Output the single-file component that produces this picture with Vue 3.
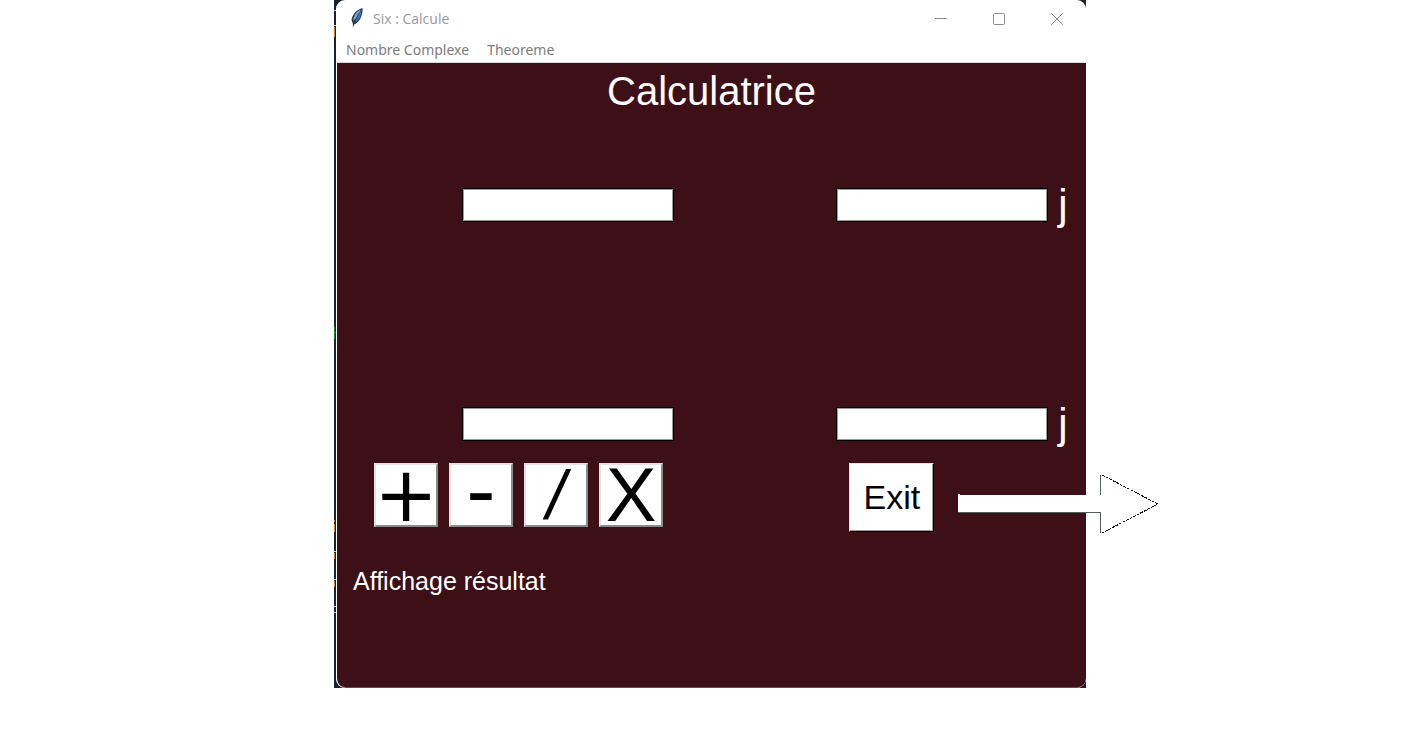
<script setup>
import { ref } from 'vue'

const values = ref({ re1: '', im1: '', re2: '', im2: '' })
const rows = [
  { re: 're1', im: 'im1' },
  { re: 're2', im: 'im2' },
]
const operators = [
  { sign: '+', name: 'plus' },
  { sign: '-', name: 'minus' },
  { sign: '/', name: 'divide' },
  { sign: 'X', name: 'times' },
]
</script>

<template>
  <div class="page">
    <div class="backdrop">
      <svg class="specks" viewBox="0 0 2 688" width="2" height="688" aria-hidden="true" shape-rendering="crispEdges">
        <path d="M0 10h2v1H0zM0 25h2v1H0zM0 551h2v1H0zM0 579h2v1H0zM0 606h2v1H0zM0 612h2v1H0z" fill="#c8ccd2" />
        <path d="M0 27h1v10H0zM0 520h1v2H0zM0 524h1v8H0zM0 553h1v6H0zM0 581h1v6H0z" fill="#c08030" />
        <path d="M0 327h1v12H0zM0 332h2v1H0z" fill="#1c8a2a" />
      </svg>
      <main class="window">
        <header class="titlebar">
          <svg class="feather" viewBox="0 0 14 22" width="14" height="22" aria-hidden="true">
            <path d="M12.500 1C7 2.500 2.500 7 1.500 13l1.300 3.500L3 20.500l1.200-3C9.500 15.500 13 8 12.500 1z" fill="#2a3340" />
            <path d="M11 2.500C6.500 4.500 3.500 8.500 3 14l3.500-3z" fill="#6fabe6" />
            <path d="M11.500 3C11.500 8.500 9 13.500 4.500 15.800l3-6.300z" fill="#3f78bd" />
            <path d="M9 6L3.800 16" fill="none" stroke="#1b2f4c" stroke-width="0.700" />
          </svg>
          <span class="caption">Six : Calcule</span>
          <div class="controls">
            <button type="button" aria-label="Réduire">
              <svg viewBox="0 0 12 12" width="12" height="12"><path d="M0 5.500h12" /></svg>
            </button>
            <button type="button" aria-label="Agrandir">
              <svg viewBox="0 0 12 12" width="12" height="12"><rect x="0.500" y="0.500" width="11" height="11" rx="1" /></svg>
            </button>
            <button type="button" aria-label="Fermer">
              <svg viewBox="0 0 12 12" width="12" height="12"><path d="M0.300 0.300l11.400 11.400M11.700 0.300L0.300 11.700" /></svg>
            </button>
          </div>
        </header>
        <nav class="menu">
          <button type="button">Nombre Complexe</button>
          <button type="button">Theoreme</button>
        </nav>
        <section class="calculator">
          <h1>Calculatrice</h1>
          <div class="entries">
            <div v-for="row in rows" :key="row.re" class="entry">
              <input v-model="values[row.re]" :id="row.re" class="real" type="text" aria-label="Partie réelle" />
              <div class="imaginary">
                <input v-model="values[row.im]" :id="row.im" type="text" />
                <label :for="row.im">j</label>
              </div>
            </div>
          </div>
          <div class="actions">
            <div class="operators">
              <button v-for="op in operators" :key="op.name" type="button" :class="['operator', op.name]">{{ op.sign }}</button>
            </div>
            <button type="button" class="exit">Exit</button>
          </div>
          <output class="result">Affichage résultat</output>
        </section>
      </main>
      <svg class="arrow" viewBox="0 0 202 60" width="202" height="60" aria-hidden="true">
        <path d="M0 20h2v1h141V1l58 29-58 29V39H0z" fill="#fff" />
        <path d="M0 38.500h143M142.500 1v20M142.500 38v21" fill="none" stroke="#555d59" shape-rendering="crispEdges" />
        <path d="M144 1l56 29-56 29" fill="none" stroke="#111" stroke-dasharray="3 1" shape-rendering="crispEdges" />
      </svg>
    </div>
  </div>
</template>

<style>
body {
  background: #fff;
}
</style>

<style scoped>
.page {
  display: grid;
  grid-template-columns: 334fr 752fr 318fr;
  font-family: "Liberation Sans", Arial, sans-serif;
}

.backdrop {
  grid-column: 2;
  position: relative;
  padding-left: 2px;
  background: #1a222c;
}

.specks {
  position: absolute;
  left: 0;
  top: 0;
}

.window {
  overflow: hidden;
  border-left: 1px solid #fff;
  border-radius: 9px;
  background: #fff;
}

button {
  margin: 0;
  padding: 0;
  border: 0;
  background: none;
  font-family: inherit;
}

.titlebar {
  display: flex;
  align-items: center;
  height: 38px;
  padding-left: 13px;
  color: #999;
  font: 14px/20px "Open Sans", "Noto Sans", sans-serif;
}

.feather {
  margin-bottom: 2px;
}

.caption {
  margin-left: 9px;
}

.controls {
  display: flex;
  margin-left: auto;
}

.controls button {
  display: grid;
  place-items: center;
  width: 58px;
  height: 38px;
}

.controls svg {
  fill: none;
  stroke: #8c8c8c;
}

.menu {
  display: flex;
  gap: 18px;
  height: 24px;
  padding-left: 9px;
  border-bottom: 1px solid #dcdcde;
}

.menu button {
  color: #7c7c7c;
  font: 14px/24px "Noto Sans", "Open Sans", sans-serif;
}

.calculator {
  padding: 5px 0 91px;
  border-bottom: 1px solid #6b4a4e;
  border-radius: 0 0 9px 9px;
  background: #3d0f16;
  color: #fff;
}

h1 {
  margin: 0;
  font-size: 40px;
  font-weight: 400;
  line-height: 46px;
  text-align: center;
}

.entries {
  display: grid;
  gap: 185px;
  margin-top: 74px;
}

.entry {
  display: grid;
  grid-template-columns: 1fr 3fr 2fr;
}

.real {
  grid-column: 2;
}

.imaginary {
  display: flex;
  align-items: center;
  gap: 10px;
}

input {
  box-sizing: border-box;
  width: 212px;
  height: 34px;
  padding: 2px 4px;
  border: 1px solid #000;
  border-radius: 0;
  background: #fff;
  box-shadow: inset 0 0 0 1px #999;
  font: 20px "Liberation Sans", Arial, sans-serif;
}

label {
  font-size: 42px;
  line-height: 34px;
}

.actions {
  display: grid;
  grid-template-columns: 4fr 2fr;
  align-items: start;
  margin-top: 22px;
}

.operators {
  display: flex;
  gap: 11px;
  padding-left: 37px;
}

.operator {
  display: flex;
  align-items: center;
  justify-content: center;
  box-sizing: border-box;
  width: 64px;
  height: 64px;
  border: 2px solid;
  border-color: #e3e3e3 #8a8a8a #8a8a8a #e3e3e3;
  background: #fff;
  color: #000;
  font-size: 76px;
  line-height: 60px;
}

.plus {
  font-family: "DejaVu Sans", sans-serif;
}

.minus {
  padding-bottom: 10px;
  font-size: 88px;
}

.divide {
  font-size: 68px;
  font-style: italic;
}

.exit {
  width: 85px;
  height: 69px;
  margin-left: 13px;
  border: 1px solid;
  border-color: #e3e3e3 #000 #000 #e3e3e3;
  background: #fff;
  box-shadow: inset -1px -1px #9a9a9a;
  color: #000;
  font-size: 34px;
}

.result {
  display: block;
  margin-top: 34px;
  padding-left: 16px;
  font-size: 25px;
  line-height: 30px;
}

.arrow {
  position: absolute;
  top: 474px;
  right: -74px;
}
</style>
